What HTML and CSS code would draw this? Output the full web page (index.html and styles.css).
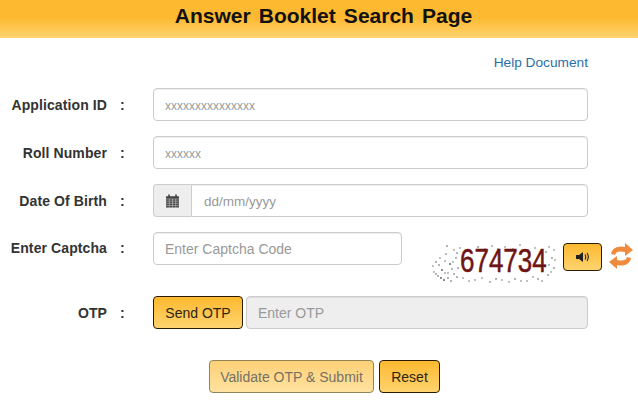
FILE: index.html
```html
<!DOCTYPE html>
<html lang="en">
<head>
<meta charset="utf-8">
<title>Answer Booklet Search Page</title>
<link rel="stylesheet" href="styles.css">
</head>
<body>
<header class="banner"><h1>Answer Booklet Search Page</h1></header>
<main class="form">
  <div class="help"><a href="#">Help Document</a></div>
  <div class="row">
    <label class="label">Application ID</label><span class="colon">:</span>
    <input class="field grow small" placeholder="xxxxxxxxxxxxxxx">
  </div>
  <div class="row">
    <label class="label">Roll Number</label><span class="colon">:</span>
    <input class="field grow small" placeholder="xxxxxx">
  </div>
  <div class="row">
    <label class="label">Date Of Birth</label><span class="colon">:</span>
    <div class="group grow">
      <span class="addon">
        <svg width="15" height="15" viewBox="0 0 14 14"><path fill="#444" d="M1 3h2V1.5h1.5V3h5V1.5H11V3h2v10.5H1z"/><path stroke="#bbb" stroke-width=".6" d="M1 5.6h12M1 7.6h12M1 9.6h12M1 11.6h12M4 5.6v8M7 5.6v8M10 5.6v8"/></svg>
      </span>
      <input class="field joined" placeholder="dd/mm/yyyy">
    </div>
  </div>
  <div class="row captcha-row">
    <label class="label">Enter Captcha</label><span class="colon">:</span>
    <input class="field captcha-input" placeholder="Enter Captcha Code">
    <svg class="captcha" width="128" height="45" viewBox="0 0 128 45">
      <g fill="#555">
        <circle cx="6" cy="22" r=".8"/><circle cx="12" cy="30" r=".9"/><circle cx="8" cy="36" r=".8"/><circle cx="16" cy="14" r=".8"/><circle cx="20" cy="24" r=".9"/><circle cx="24" cy="34" r=".8"/><circle cx="14" cy="40" r=".9"/><circle cx="21" cy="41" r=".8"/><circle cx="26" cy="18" r=".8"/><circle cx="4" cy="32" r=".7"/><circle cx="10" cy="18" r=".7"/><circle cx="18" cy="33" r=".7"/><circle cx="28" cy="28" r=".8"/><circle cx="30" cy="8" r=".7"/><circle cx="17" cy="6" r=".8"/><circle cx="24" cy="10" r=".7"/><circle cx="33" cy="38" r=".7"/><circle cx="45" cy="40" r=".7"/><circle cx="60" cy="42" r=".8"/><circle cx="72" cy="40" r=".7"/><circle cx="85" cy="39" r=".8"/><circle cx="97" cy="41" r=".7"/><circle cx="108" cy="39" r=".8"/><circle cx="118" cy="35" r=".8"/><circle cx="124" cy="28" r=".8"/><circle cx="122" cy="18" r=".8"/><circle cx="116" cy="12" r=".8"/><circle cx="124" cy="10" r=".7"/><circle cx="105" cy="8" r=".7"/><circle cx="90" cy="5" r=".7"/><circle cx="75" cy="7" r=".7"/><circle cx="62" cy="6" r=".7"/><circle cx="48" cy="7" r=".8"/><circle cx="119" cy="25" r=".7"/><circle cx="113" cy="30" r=".7"/>
        <circle cx="3" cy="26" r=".7"/><circle cx="9" cy="25" r=".8"/><circle cx="15" cy="21" r=".7"/><circle cx="23" cy="22" r=".7"/><circle cx="27" cy="13" r=".8"/><circle cx="11" cy="38" r=".9"/><circle cx="18" cy="38" r=".8"/><circle cx="27" cy="37" r=".8"/><circle cx="6" cy="34" r=".8"/><circle cx="22" cy="29" r=".8"/><circle cx="15" cy="33" r=".7"/><circle cx="39" cy="41" r=".7"/><circle cx="52" cy="38" r=".7"/><circle cx="66" cy="39" r=".8"/><circle cx="79" cy="42" r=".7"/><circle cx="91" cy="41" r=".7"/><circle cx="103" cy="37" r=".7"/><circle cx="112" cy="41" r=".7"/><circle cx="121" cy="32" r=".7"/><circle cx="125" cy="20" r=".7"/><circle cx="119" cy="7" r=".7"/><circle cx="110" cy="14" r=".7"/><circle cx="98" cy="10" r=".7"/><circle cx="83" cy="9" r=".7"/><circle cx="68" cy="9" r=".7"/><circle cx="55" cy="9" r=".7"/><circle cx="40" cy="11" r=".7"/>
      </g>
      <text class="captcha-text" x="30" y="25.4" transform="scale(1 1.25)">674734</text>
    </svg>
    <button class="btn sound" type="button" aria-label="Play">
      <svg width="14" height="10" viewBox="0 0 14 10"><path fill="#222" d="M0 3h3l4-3v10L3 7H0z"/><path fill="none" stroke="#222" stroke-width="1.1" d="M9 2.5q1.5 2.5 0 5M11 1q2.6 4 0 8"/></svg>
    </button>
    <svg class="refresh" width="24" height="28" viewBox="0 0 24 28">
      <path fill="#f08a3c" d="M2 12C3 6 9 3 16 5V1l8 7-8 6v-4c-5-1-9-1-10 3zM22 16c-1 6-7 9-14 7v4l-8-7 8-6v4c5 1 9 1 10-3z"/>
    </svg>
  </div>
  <div class="row otp-row">
    <label class="label">OTP</label><span class="colon">:</span>
    <button class="btn send" type="button">Send OTP</button>
    <input class="field grow" placeholder="Enter OTP" disabled>
  </div>
  <div class="actions">
    <button class="btn submit" type="button">Validate OTP &amp; Submit</button>
    <button class="btn reset" type="button">Reset</button>
  </div>
</main>
</body>
</html>
```
FILE: styles.css
```css
* { box-sizing: border-box; }
body {
  margin: 0;
  background: #fff;
  font-family: "Liberation Sans", Arial, sans-serif;
  font-size: 14px;
  color: #333;
  overflow: hidden;
}
.banner {
  height: 38px;
  background: linear-gradient(to bottom, #fdb92f 0%, #fdb92f 45%, #fed36f 100%);
  display: flex;
  align-items: center;
  justify-content: center;
  padding: 0 0 6px 9px;
}
.banner h1 {
  margin: 0;
  font-size: 21px;
  font-weight: bold;
  color: #111;
  word-spacing: 2.3px;
}
.form { padding: 17px 50px 0 0; }
.help {
  text-align: right;
  height: 33px;
  line-height: 16px;
  font-size: 13.7px;
}
.help a { color: #2a6fa8; text-decoration: none; }
.row {
  display: flex;
  align-items: center;
  height: 33px;
  margin-bottom: 15px;
}
.label {
  flex: none;
  width: 107px;
  text-align: right;
  font-weight: bold;
  color: #333;
  white-space: nowrap;
  letter-spacing: .1px;
}
.colon {
  flex: none;
  width: 46px;
  padding-left: 13px;
  font-weight: bold;
}
.grow { flex: 1; min-width: 0; }
.field {
  height: 33px;
  border: 1px solid #ccc;
  border-radius: 4px;
  padding: 0 11px;
  font: 14px "Liberation Sans", Arial, sans-serif;
  color: #555;
  background: #fff;
  box-shadow: inset 0 1px 1px rgba(0,0,0,.075);
  outline: none;
}
.field::placeholder { color: #999; opacity: 1; }
.field.small::placeholder { font-size: 12px; }
.field:disabled { background: #eee; }
.group { display: flex; height: 33px; }
.addon {
  flex: none;
  width: 38px;
  display: flex;
  align-items: center;
  justify-content: center;
  background: #eee;
  border: 1px solid #ccc;
  border-right: 0;
  border-radius: 4px 0 0 4px;
}
.joined { flex: 1; min-width: 0; border-radius: 0 4px 4px 0; padding-left: 12px; }
.joined::placeholder { font-size: 13.5px; }
.captcha-row {
  align-items: flex-start;
  height: 53px;
  margin-bottom: 11px;
}
.captcha-row .label, .captcha-row .colon { line-height: 33px; }
.captcha-input { flex: none; width: 249px; }
.captcha { margin: 8px 0 0 28px; flex: none; }
.captcha-text {
  font: 26px "Liberation Sans", Arial, sans-serif;
  fill: #6e1414;
  stroke: #6e1414;
  stroke-width: .4;
}
.btn {
  height: 33px;
  border: 1px solid #2a1c00;
  border-radius: 4px;
  background: linear-gradient(to bottom, #fdb92f, #fed36f);
  font: 14px "Liberation Sans", Arial, sans-serif;
  color: #2b2410;
  padding: 0;
}
.sound {
  width: 39px;
  height: 28px;
  margin: 11px 0 0 5px;
  flex: none;
  display: flex;
  align-items: center;
  justify-content: center;
}
.refresh { margin: 10px 0 0 7px; flex: none; }
.send { width: 90px; margin-right: 3px; flex: none; }
.otp-row { margin-bottom: 31px; }
.actions {
  display: flex;
  gap: 5px;
  padding-left: 209px;
}
.submit { width: 165px; opacity: .65; border-color: #5a4300; }
.reset { width: 61px; }
```
